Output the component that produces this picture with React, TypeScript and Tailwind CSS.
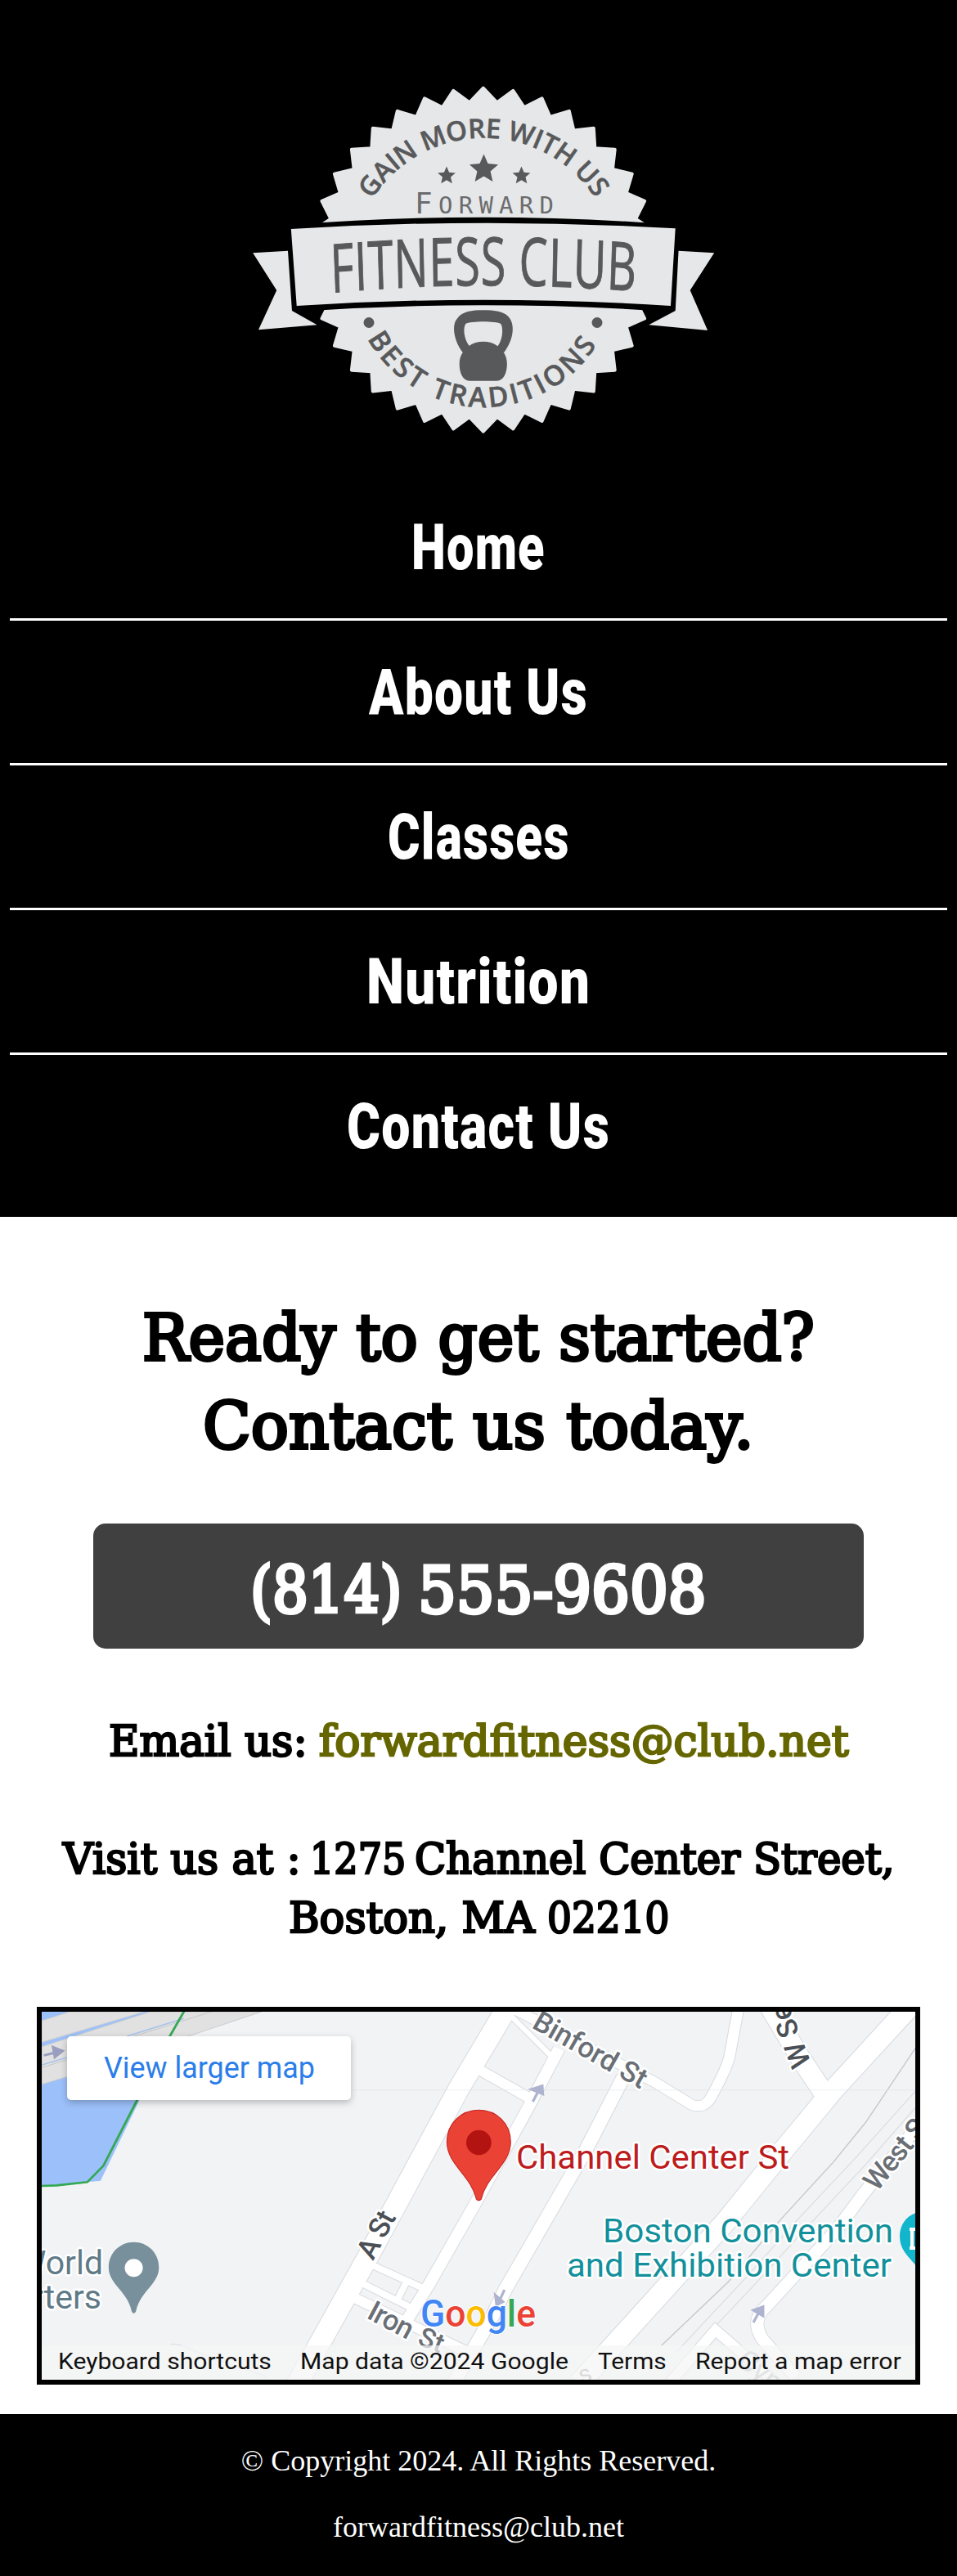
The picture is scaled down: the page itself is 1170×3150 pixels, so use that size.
import { useLayoutEffect, useRef, useState } from "react";
import type { ReactNode } from "react";

/** A single line of text condensed or widened horizontally to an exact width. */
function FitText({ width, className = "", children }: { width: number; className?: string; children: ReactNode }) {
  const inner = useRef<HTMLSpanElement>(null);
  const [scale, setScale] = useState(1);
  useLayoutEffect(() => {
    if (inner.current) setScale(width / inner.current.offsetWidth);
  }, [width]);
  return (
    <span className={`flex justify-start whitespace-nowrap ${className}`} style={{ width }}>
      <span ref={inner} className="block shrink-0 origin-left" style={{ transform: `scaleX(${scale})` }}>
        {children}
      </span>
    </span>
  );
}

function badgePath() {
  const pts: string[] = [];
  for (let i = 0; i < 72; i++) {
    const a = (i * 5 * Math.PI) / 180;
    const r = i % 2 === 0 ? 210 : 193;
    pts.push(`${(300.8 + r * Math.sin(a)).toFixed(1)},${(227.7 - r * Math.cos(a)).toFixed(1)}`);
  }
  return pts.join(" ");
}

function starPoints(cx: number, cy: number, r: number) {
  return Array.from({ length: 10 }, (_, i) => {
    const a = (i * 36 * Math.PI) / 180;
    const q = i % 2 === 0 ? r : r * 0.46;
    return `${(cx + q * Math.sin(a)).toFixed(1)},${(cy - q * Math.cos(a)).toFixed(1)}`;
  }).join(" ");
}

function Logo() {
  return (
    <svg width="600" height="460" viewBox="0 0 600 460" className="block" role="img" aria-label="Forward Fitness Club">
      <defs>
        <path id="arc-top" d="M165 154 A162 162 0 0 1 440 156" />
        <path id="arc-bottom" d="M159 324 A163 163 0 0 0 443 326" />
        <path id="arc-name" d="M169 268 Q442 251 720 266.5" />
      </defs>
      <polygon points={badgePath()} fill="#e6e7e8" stroke="#e6e7e8" strokeWidth="4" strokeLinejoin="round" />
      <g transform="scale(.38265 .33333)">
        <path d="M180 554 Q786 500 1392 554 L1392 874 Q786 826 180 874Z" fill="#000" />
        <path d="M172 570 Q786 527 1400 568 L1385 852 Q786 808 190 852Z" fill="#e6e7e8" />
        <path d="M50 658 L162 650 L175 870 L255 922 L68 940 L126 795Z" fill="#e6e7e8" />
        <path d="M1524 658 L1410 650 L1400 870 L1315 922 L1503 942 L1447 795Z" fill="#e6e7e8" />
        <path
          fill="#58595b"
          fillRule="evenodd"
          d="M720 1022 C690 975 686 920 702 900 C718 872 750 868 786 868 C822 868 858 872 872 900 C886 925 884 975 853 1022Z M742 1000 C722 970 722 930 730 918 C745 907 828 907 842 918 C850 930 850 975 832 1000Z"
        />
        <path
          fill="#58595b"
          d="M740 1000 C765 978 808 978 832 1000 C854 1020 862 1040 862 1065 C862 1100 850 1127 830 1127 L742 1127 C722 1127 710 1100 710 1065 C710 1040 718 1020 740 1000Z"
        />
      </g>
      <g fill="#58595b">
        <polygon points={starPoints(256, 125, 11.5)} />
        <polygon points={starPoints(301.5, 117, 18.5)} />
        <polygon points={starPoints(347.5, 125, 11.5)} />
        <circle cx="161" cy="304.5" r="6.5" />
        <circle cx="440" cy="304.5" r="6.5" />
        <text className="font-['Open_Sans'] text-[33px] font-semibold stroke-[#58595b] stroke-[0.5px]">
          <textPath href="#arc-top" textLength="324">GAIN MORE WITH US</textPath>
        </text>
        <text className="font-['Open_Sans'] text-[34px] font-semibold stroke-[#58595b] stroke-[0.5px]">
          <textPath href="#arc-bottom" textLength="338">BEST TRADITIONS</textPath>
        </text>
        <g transform="scale(.68 1)">
          <text className="font-['Open_Sans'] text-[82px] font-normal stroke-[#58595b] stroke-1">
            <textPath href="#arc-name" textLength="548">FITNESS CLUB</textPath>
          </text>
        </g>
        <text x="217" y="170.5" fill="#6b6c6e" textLength="170" className="font-['DejaVu_Sans_Mono'] text-[29px]">
          <tspan className="text-[36px]">F</tspan>ORWARD
        </text>
      </g>
    </svg>
  );
}

const leftRoads: [string, number][] = [
  ["M915 1460 L1175 960 L1485 345 L1660 30", 72],
  ["M1310 1190 L1385 1060 L1550 750 L1725 410 L1830 195", 40],
  ["M1160 975 L1360 1072", 24],
  ["M1135 1045 L1330 1150", 24],
  ["M1310 1045 L1275 1120", 22],
  ["M1110 1100 L1530 1315", 36],
];

const rightRoads: [string, number][] = [
  ["M510 300 L380 570 L105 1080 L60 1180 L-70 1420", 46],
  ["M100 30 L620 320 L745 402 Q790 418 812 370 Q868 260 874 220 L905 40", 36],
  ["M120 70 L270 230", 18],
  ["M20 275 L190 378", 36],
  ["M1500 30 L1230 345 L1060 565 L860 830 L480 1280 L360 1420", 72],
  ["M1010 40 L1110 220 L1200 365", 68],
  ["M1540 450 L1330 730 L1240 860 L1000 1140 Q945 1190 985 1260 L1100 1400", 42],
  ["M670 1420 L825 1228 L1010 1400", 36],
];

function MapArt() {
  const halo = "stroke-white stroke-[5px] [paint-order:stroke] [stroke-linejoin:round]";
  return (
    <svg width="1068" height="450" viewBox="0 0 1068 450" className="block font-['Roboto']" aria-hidden="true">
      <rect width="1068" height="450" fill="#f1f3f5" />
      <g transform="translate(-21 -20) scale(.357143 .333333)" fill="none">
        <path d="M59 60 L545 60 L400 370 L260 680 L215 685 L110 700 L59 700Z" fill="#9cc0fa" />
        <path d="M59 93 L155 60 L410 60 L59 172Z" fill="#e1e1e1" stroke="#cbcdd0" strokeWidth="3" />
        <path d="M59 188 L430 60 L810 60 L560 150 L140 300 L59 326Z" fill="#e1e1e1" stroke="#cbcdd0" strokeWidth="3" />
        <path d="M59 255 L145 228 M350 150 L545 85" stroke="#a9c3ea" strokeWidth="5" />
        <path d="M59 265 L145 236 M350 158 L640 60" stroke="#c6c8cc" strokeWidth="3" />
        <path d="M548 55 L497 150 L385 385 L270 625 L215 685 L110 697 L59 699" stroke="#34a853" strokeWidth="8" />
        <path d="M66 220 L105 210 M98 190 L130 204 L104 226Z" stroke="#9a9fc0" strokeWidth="9" fill="#9a9fc0" />
        {leftRoads.map(([d, w]) => (
          <path key={d} d={d} stroke="#d8dbdf" strokeWidth={w + 6} />
        ))}
        <path d="M500 1280 Q530 1275 570 1300 L830 1400" stroke="#dfe1e5" strokeWidth="4" />
      </g>
      <g transform="translate(529 -20) scale(.357143 .333333)" fill="none">
        <path d="M1515 185 L1340 465 L1230 610 L1050 820 L870 1050 L640 1285" stroke="#c5c8cd" strokeWidth="4" />
        <path d="M1515 345 L1310 590 L1100 830 L930 1035 L690 1310" stroke="#d8dbdf" strokeWidth="3" />
        <path d="M1515 405 L1340 620 L1130 860 L960 1060 L740 1310" stroke="#d8dbdf" strokeWidth="3" />
        {rightRoads.map(([d, w]) => (
          <path key={d} d={d} stroke="#d8dbdf" strokeWidth={w + 6} />
        ))}
        {rightRoads.map(([d, w]) => (
          <path key={d} d={d} stroke="#fff" strokeWidth={w} />
        ))}
      </g>
      <g transform="translate(-21 -20) scale(.357143 .333333)" fill="none">
        {leftRoads.map(([d, w]) => (
          <path key={d} d={d} stroke="#fff" strokeWidth={w} />
        ))}
        <path d="M1117 347 L3060 347" stroke="#e4e6e9" strokeWidth="2" />
      </g>
      <g transform="translate(529 -20) scale(.357143 .333333)" fill="#aeb3cf" stroke="#aeb3cf" strokeWidth="9">
        <path d="M200 390 L222 345 M195 345 L232 332 L234 362Z" />
        <path d="M103 1080 L88 1115 M72 1100 L76 1136 L98 1124Z" />
        <path d="M955 1200 L975 1160 M955 1155 L988 1142 L988 1176Z" />
      </g>

      <g className="text-[35px] font-medium">
        <text transform="translate(405 305) rotate(-62)" textLength="61" fill="#4b5056" className={halo}>A St</text>
        <text transform="translate(396 374) rotate(28)" textLength="58" fill="#6a6f76" className={halo}>Iron</text>
        <text transform="translate(458 406) rotate(22)" fill="#6a6f76" className={`${halo} text-[33px]`}>St</text>
        <text transform="translate(598 19) rotate(29.5)" textLength="154" fill="#6a6f76" className={halo}>Binford St</text>
        <text transform="translate(941 63) rotate(-111)" fill="#4b5056" className={halo}>W Se</text>
        <text transform="translate(1021 221) rotate(-51)" textLength="101" fill="#6a6f76" className={halo}>West S</text>
      </g>
      <g className="text-[41px]">
        <text x="580" y="192" textLength="334" lengthAdjust="spacingAndGlyphs" fill="#bd1c1c" className={halo}>Channel Center St</text>
        <text x="686" y="281.5" textLength="355" lengthAdjust="spacingAndGlyphs" fill="#12909b" className={halo}>Boston Convention</text>
        <text x="642" y="323.5" textLength="397" lengthAdjust="spacingAndGlyphs" fill="#12909b" className={halo}>and Exhibition Center</text>
        <text x="75" y="320.5" textAnchor="end" fill="#5f7a86" className={halo}>World</text>
        <text x="73" y="362.5" textAnchor="end" fill="#5f7a86" className={halo}>rters</text>
      </g>

      <g transform="translate(-21 -20) scale(.357143 .333333)">
        <path d="M374 905 C422 905 460 945 460 998 C460 1060 395 1085 381 1160 Q374 1172 367 1160 C353 1085 288 1060 288 998 C288 945 326 905 374 905Z" fill="#78909c" />
        <ellipse cx="374" cy="1000" rx="31" ry="33" fill="#fff" />
        <path d="M1555 421 C1616 421 1664 470 1664 538 C1664 620 1582 660 1563 748 Q1555 756 1547 748 C1528 660 1446 620 1446 538 C1446 470 1494 421 1555 421Z" fill="#ea4335" stroke="#c5221f" strokeWidth="3" />
        <ellipse cx="1555" cy="540" rx="43" ry="46" fill="#b31412" />
      </g>
      <path d="M1080 244 C1062 244 1049 257 1049 274 C1049 298 1068 302 1080 328Z" fill="#12b5cb" />
      <path d="M1061 264h7v4h-2v19h2v4h-7v-4h1v-19h-1Z" fill="#fff" />

      <text x="463" y="384.5" textLength="141" lengthAdjust="spacingAndGlyphs" className="text-[47px] font-medium stroke-white stroke-[2px] [paint-order:stroke]">
        <tspan fill="#4285f4">G</tspan>
        <tspan fill="#ea4335">o</tspan>
        <tspan fill="#fbbc04">o</tspan>
        <tspan fill="#4285f4">g</tspan>
        <tspan fill="#34a853">l</tspan>
        <tspan fill="#ea4335">e</tspan>
      </text>
      <text x="660" y="455" transform="rotate(-20 660 455)" fill="#9a9da2" className="text-[30px]">s</text>
      <text x="848" y="430" transform="rotate(38 848 430)" fill="#b4b7bb" className="text-[35px]">Cyp</text>
    </svg>
  );
}

const navItems = [
  { label: "Home", width: 164 },
  { label: "About Us", width: 268 },
  { label: "Classes", width: 223 },
  { label: "Nutrition", width: 274 },
  { label: "Contact Us", width: 322 },
];

const mapLinks = [
  { label: "Keyboard shortcuts", width: 261 },
  { label: "Map data ©2024 Google", width: 328 },
  { label: "Terms", width: 84 },
  { label: "Report a map error", width: 252 },
];

export default function App() {
  return (
    <div className="flex h-[3150px] w-[1170px] flex-col overflow-hidden bg-white">
      <header className="h-[1488px] bg-black px-3 text-white">
        <div className="flex h-[582px] items-start pt-[90px] pl-[278px]">
          <Logo />
        </div>
        <nav>
          <ul>
            {navItems.map((item) => (
              <li key={item.label} className="flex h-[177px] justify-center border-b-[3px] border-white pt-[2px] last:border-b-0">
                <a href="#" className="font-['Roboto',sans-serif] text-[77px] leading-[172px] font-black tracking-[1.5px]">
                  <FitText width={item.width}>{item.label}</FitText>
                </a>
              </li>
            ))}
          </ul>
        </nav>
      </header>

      <main className="flex flex-col items-center px-[45px] pt-[94px] pb-9 font-['DejaVu_Serif',serif] font-normal text-black">
        <h1 className="flex flex-col items-center text-[79px] leading-[108px] [-webkit-text-stroke:4px_black] [word-spacing:1px]">
          <FitText width={822}>Ready to get started?</FitText>
          <FitText width={674}>Contact us today.</FitText>
        </h1>
        <a href="#" className="mt-[65px] flex h-[153px] w-[942px] items-center justify-center gap-[20px] rounded-[15px] bg-[#404040] pt-[11px] text-[79px] leading-[108px] text-white [-webkit-text-stroke:4.5px_white]">
          <FitText width={185}>(814)</FitText>
          <FitText width={353}>555-9608</FitText>
        </a>
        <p className="mt-[77px] flex gap-[14px] text-[52px] leading-[72px] [-webkit-text-stroke:2.6px]">
          <FitText width={243}>Email us:</FitText>
          <a href="#" className="text-[#666600]">
            <FitText width={648}>forwardfitness@club.net</FitText>
          </a>
        </p>
        <p className="mt-[72px] flex flex-col items-center text-[52px] leading-[72px] [-webkit-text-stroke:2.6px]">
          <span className="flex gap-[11px]">
            <FitText width={291}>Visit us at :</FitText>
            <FitText width={117}>1275</FitText>
            <FitText width={587}>Channel Center Street,</FitText>
          </span>
          <span className="flex gap-[15px]">
            <FitText width={301}>Boston, MA</FitText>
            <FitText width={149}>02210</FitText>
          </span>
        </p>
        <section className="relative mt-[73px] h-[462px] w-[1080px] overflow-hidden border-[6px] border-black font-['Roboto',sans-serif] font-normal">
          <MapArt />
          <a href="#" className="absolute top-[30px] left-[31px] flex h-[78px] w-[347px] items-center justify-center rounded-[5px] bg-white text-[37px] text-[#2b7de9] shadow-[0_3px_8px_rgba(0,0,0,0.25)]">
            <FitText width={258}>View larger map</FitText>
          </a>
          <div className="absolute bottom-0 left-0 flex h-[42px] w-full items-center justify-between bg-[#f5f5f5]/70 pr-[17px] pb-[2px] pl-[20px] text-[28px] text-[#111]">
            {mapLinks.map((l) => (
              <FitText key={l.label} width={l.width}>{l.label}</FitText>
            ))}
          </div>
        </section>
      </main>

      <footer className="flex flex-1 flex-col items-center gap-[39px] bg-black pt-9 font-['Liberation_Serif',serif] text-[36px] leading-[42px] text-white">
        <p>© Copyright 2024. All Rights Reserved.</p>
        <a href="#">forwardfitness@club.net</a>
      </footer>
    </div>
  );
}
